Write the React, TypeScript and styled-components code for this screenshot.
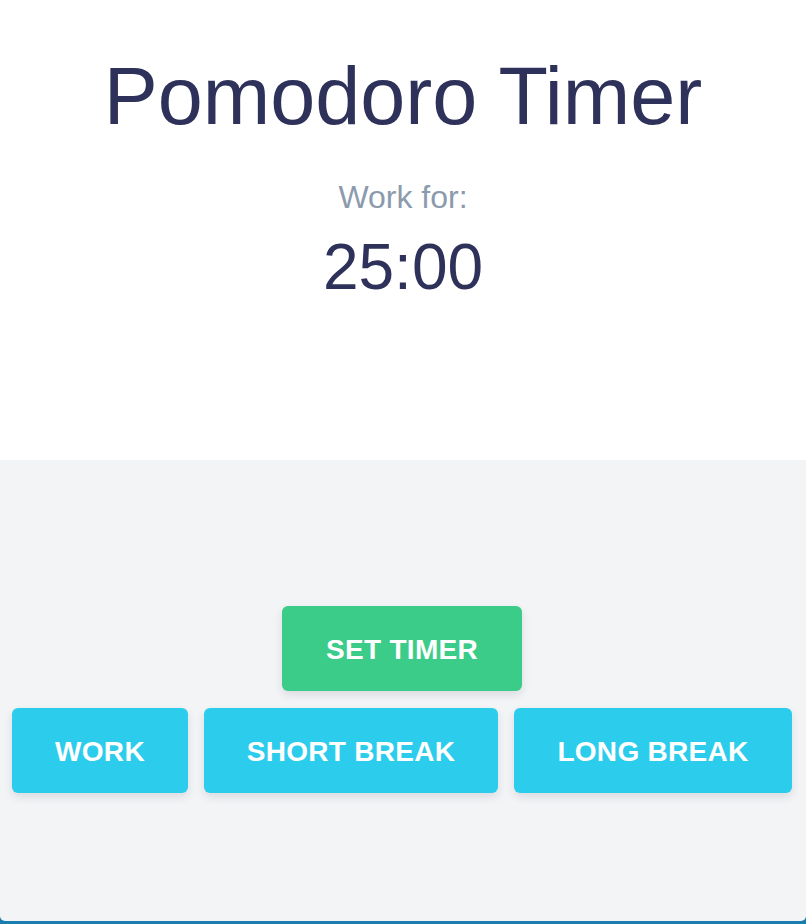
import React from "react";
import styled, { createGlobalStyle } from "styled-components";

const Global = createGlobalStyle`
  html, body { margin: 0; padding: 0; }
  body {
    background: #1a7db0;
    font-family: "Liberation Sans", Arial, sans-serif;
  }
`;

const Card = styled.div`
  width: 806px;
  height: 921px;
  display: flex;
  flex-direction: column;
  border-radius: 0 0 5px 5px;
  overflow: hidden;
  background: #f3f4f6;
`;

const Header = styled.header`
  height: 460px;
  box-sizing: border-box;
  background: #ffffff;
  display: flex;
  flex-direction: column;
  align-items: center;
  padding-top: 56px;
`;

const Title = styled.h1`
  margin: 0;
  font-size: 81px;
  line-height: 1;
  font-weight: 400;
  color: #2e3159;
`;

const Label = styled.div`
  margin-top: 44px;
  font-size: 32px;
  line-height: 1;
  color: #8b9bad;
`;

const Clock = styled.div`
  margin-top: 22px;
  font-size: 64px;
  line-height: 1;
  color: #2e3159;
`;

const Controls = styled.section`
  flex: 1;
  display: flex;
  flex-direction: column;
  align-items: center;
  padding: 146px 2px 0 0;
  gap: 17px;
`;

const Row = styled.div`
  display: flex;
  gap: 16px;
  justify-content: center;
`;

const Button = styled.button<{ $tone: "green" | "cyan"; $w: number }>`
  width: ${(p) => p.$w}px;
  height: 85px;
  border: none;
  border-radius: 6px;
  background: ${(p) => (p.$tone === "green" ? "#3ccc89" : "#2ccdec")};
  color: #ffffff;
  font-family: "Liberation Sans", Arial, sans-serif;
  font-weight: 700;
  font-size: 28px;
  letter-spacing: 0.3px;
  box-shadow: 0 4px 8px rgba(40, 50, 80, 0.12);
  cursor: pointer;
  padding: 3px 0 0;
`;

export default function App() {
  return (
    <>
      <Global />
      <Card>
        <Header>
          <Title>Pomodoro Timer</Title>
          <Label>Work for:</Label>
          <Clock>25:00</Clock>
        </Header>
        <Controls>
          <Button $tone="green" $w={240}>SET TIMER</Button>
          <Row>
            <Button $tone="cyan" $w={176}>WORK</Button>
            <Button $tone="cyan" $w={294}>SHORT BREAK</Button>
            <Button $tone="cyan" $w={278}>LONG BREAK</Button>
          </Row>
        </Controls>
      </Card>
    </>
  );
}
